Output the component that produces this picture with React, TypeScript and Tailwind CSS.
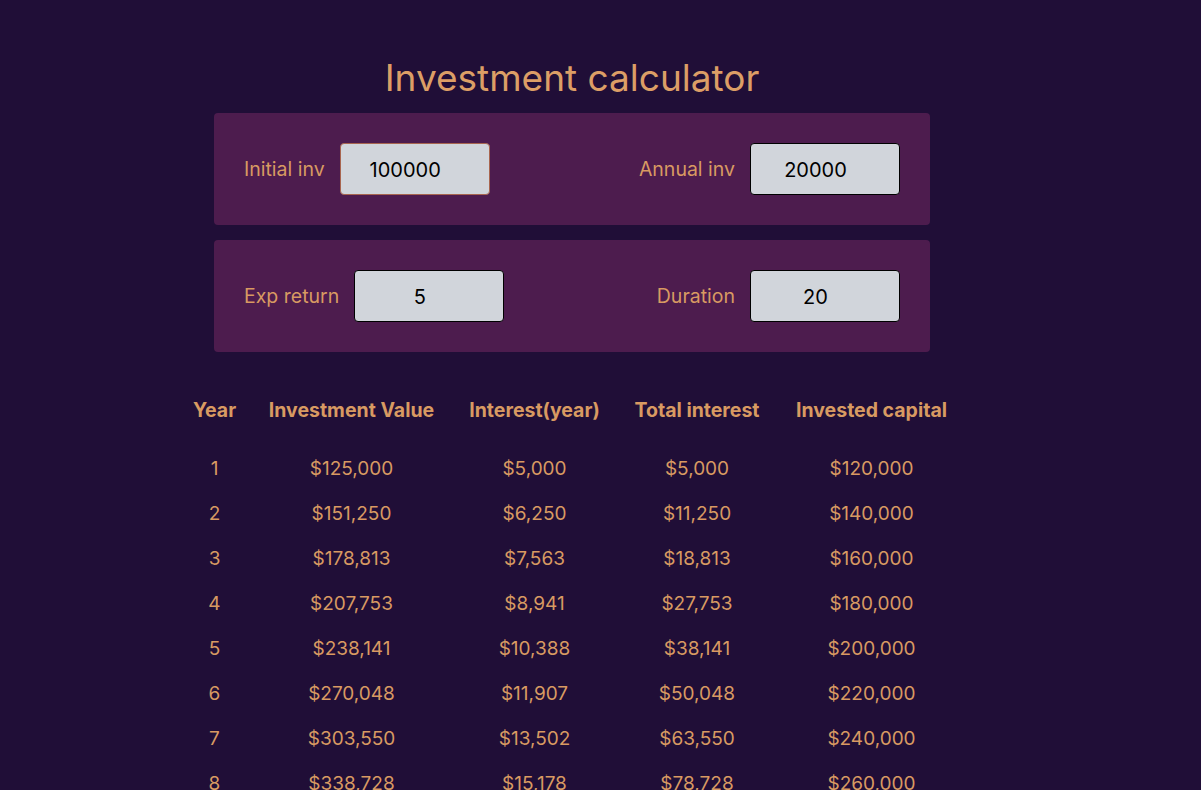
import { useState } from 'react';

type Row = { year: number; value: number; interest: number; totalInterest: number; capital: number };

const money = (n: number) =>
  new Intl.NumberFormat('en-US', { style: 'currency', currency: 'USD', maximumFractionDigits: 0 }).format(n);

function buildRows(initial: number, annual: number, rate: number, years: number): Row[] {
  const rows: Row[] = [];
  let value = initial;
  let totalInterest = 0;
  for (let year = 1; year <= years; year++) {
    const interest = value * (rate / 100);
    value = value + interest + annual;
    totalInterest += interest;
    rows.push({ year, value, interest, totalInterest, capital: value - totalInterest });
  }
  return rows;
}

function Field({
  label,
  value,
  onChange,
  focused,
}: {
  label: string;
  value: string;
  onChange: (v: string) => void;
  focused?: boolean;
}) {
  return (
    <label className="flex items-center gap-[15px]">
      <span className="pt-[2px] text-[19.5px] text-[#d89a62]">{label}</span>
      <input
        type="text"
        value={value}
        onChange={(e) => onChange(e.target.value)}
        className={`h-[52px] w-[150px] rounded-[4px] border bg-[#d1d5db] pl-2 pr-[27px] pt-[2px] text-center text-[20px] text-black outline-none ${
          focused ? 'border-[#a8654f]' : 'border-black'
        }`}
      />
    </label>
  );
}

export default function App() {
  const [initial, setInitial] = useState('100000');
  const [annual, setAnnual] = useState('20000');
  const [ret, setRet] = useState('5');
  const [duration, setDuration] = useState('20');

  const rows = buildRows(Number(initial) || 0, Number(annual) || 0, Number(ret) || 0, Number(duration) || 0);

  return (
    <div className="min-h-screen bg-[#200e37] font-['Inter',sans-serif] text-[#d89a62]">
      <div className="flex w-[1144px] flex-col items-center pt-[55px]">
        <h1 className="mb-[12px] text-[37px] font-normal leading-[46px] text-[#dc9e66]">Investment calculator</h1>

        <div className="flex w-[716px] flex-col gap-[15px]">
          <div className="flex h-[112px] items-center justify-between rounded-[4px] bg-[#4d1c4e] px-[30px]">
            <Field label="Initial inv" value={initial} onChange={setInitial} focused />
            <Field label="Annual inv" value={annual} onChange={setAnnual} />
          </div>
          <div className="flex h-[112px] items-center justify-between rounded-[4px] bg-[#4d1c4e] px-[30px]">
            <Field label="Exp return" value={ret} onChange={setRet} />
            <Field label="Duration" value={duration} onChange={setDuration} />
          </div>
        </div>

        <table className="mt-[41px] table-fixed border-collapse text-center">
          <colgroup>
            <col className="w-[73px]" />
            <col className="w-[201px]" />
            <col className="w-[165px]" />
            <col className="w-[160px]" />
            <col className="w-[189px]" />
          </colgroup>
          <thead>
            <tr className="h-[36px] text-[19.5px] font-bold">
              <th>Year</th>
              <th>Investment Value</th>
              <th>Interest(year)</th>
              <th>Total interest</th>
              <th>Invested capital</th>
            </tr>
          </thead>
          <tbody className="text-[19px]">
            <tr className="h-[18px]" />
            {rows.map((r) => (
              <tr key={r.year} className="h-[45px]">
                <td>{r.year}</td>
                <td>{money(r.value)}</td>
                <td>{money(r.interest)}</td>
                <td>{money(r.totalInterest)}</td>
                <td>{money(r.capital)}</td>
              </tr>
            ))}
          </tbody>
        </table>
      </div>
    </div>
  );
}
